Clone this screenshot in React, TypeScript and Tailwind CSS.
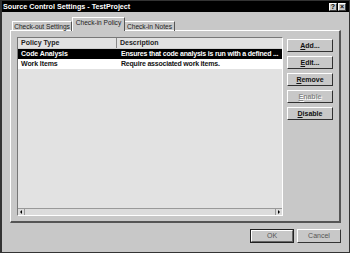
import React from 'react';

const TitleBtn = ({ children }: { children: React.ReactNode }) => (
  <div className="w-[8px] h-[8px] bg-[#c8c8c8] border-t border-l border-white border-r border-b border-r-[#404040] border-b-[#404040] flex items-center justify-center text-[7px] font-bold leading-none text-black">
    {children}
  </div>
);

const SideBtn = ({ u, rest, disabled }: { u: string; rest: string; disabled?: boolean }) => (
  <div
    className={`h-[13px] bg-[#c8c8c8] border-t border-l border-white border-r border-b border-r-[#303030] border-b-[#303030] text-center text-[7px] leading-[11px] font-bold ${
      disabled ? 'text-[#8a8a8a] [text-shadow:1px_1px_0_#ffffff]' : 'text-[#111]'
    }`}
  >
    <span className="underline underline-offset-[1px]">{u}</span>
    {rest}
  </div>
);

const rows = [
  { type: 'Code Analysis', desc: 'Ensures that code analysis is run with a defined ...', selected: true },
  { type: 'Work Items', desc: 'Require associated work items.', selected: false },
];

export default function App() {
  return (
    <div className="w-[350px] h-[253px] bg-[#c8c8c8] font-['Liberation_Sans',Arial,sans-serif] border border-l-2 border-[#333] flex flex-col overflow-hidden select-none">
      {/* Title bar */}
      <div className="h-[11px] bg-black flex items-center justify-between pl-[1px] pr-[3px]">
        <div className="text-white text-[7.2px] font-bold leading-[11px]">Source Control Settings - TestProject</div>
        <div className="flex gap-[1px]">
          <TitleBtn>?</TitleBtn>
          <TitleBtn>×</TitleBtn>
        </div>
      </div>

      <div className="flex flex-col pl-[8px] pr-[8px] pt-[5px]">
        {/* Tabs */}
        <div className="flex items-end h-[14px] relative z-10 -mb-px text-[6.6px] text-[#222] pl-[2px]">
          <div className="w-[60px] h-[10px] border-t border-l border-white border-r border-r-[#555] text-center leading-[9px]">
            Check-out Settings
          </div>
          <div className="w-[53px] h-[14px] bg-[#c8c8c8] border-t border-l border-white border-r border-r-[#555] text-center leading-[10px]">
            Check-in Policy
          </div>
          <div className="w-[50px] h-[10px] border-t border-white border-r border-r-[#555] text-center leading-[9px]">
            Check-in Notes
          </div>
        </div>

        {/* Panel */}
        <div className="h-[193px] border-t border-l border-white border-r-2 border-b-2 border-r-[#555] border-b-[#555] flex gap-[4px] pl-[6px] pt-[6px] pr-[6px]">
          {/* List */}
          <div className="w-[266px] h-[179px] bg-[#e2e2e2] border-t border-l border-[#777] border-r border-b border-r-white border-b-white flex flex-col text-[7px] font-bold">
            <div className="flex h-[11px] border-b border-[#cfcfcf] text-[#222] leading-[10px]">
              <div className="w-[99px] pl-[3px] border-r border-[#888]">Policy Type</div>
              <div className="flex-1 pl-[3px]">Description</div>
            </div>
            {rows.map((r) => (
              <div
                key={r.type}
                className={`flex h-[10px] leading-[10px] ${r.selected ? 'bg-black text-white' : 'bg-white text-[#111]'}`}
              >
                <div className="w-[100px] pl-[3px] tracking-[-0.1px]">{r.type}</div>
                <div className="flex-1 pl-[3px] whitespace-nowrap overflow-hidden tracking-[-0.2px]">{r.desc}</div>
              </div>
            ))}
            {/* Horizontal scrollbar */}
            <div className="mt-auto h-[7px] border-t border-[#999] flex justify-between bg-[#dcdcdc]">
              <div className="w-[7px] h-full border-r border-[#999] flex items-center justify-center">
                <div className="w-0 h-0 border-y-[2px] border-y-transparent border-r-[2px] border-r-black" />
              </div>
              <div className="w-[7px] h-full border-l border-[#999] flex items-center justify-center">
                <div className="w-0 h-0 border-y-[2px] border-y-transparent border-l-[2px] border-l-black" />
              </div>
            </div>
          </div>

          {/* Buttons */}
          <div className="w-[46px] flex flex-col gap-[4px] pt-[2px]">
            <SideBtn u="A" rest="dd..." />
            <SideBtn u="E" rest="dit..." />
            <SideBtn u="R" rest="emove" />
            <SideBtn u="E" rest="nable" disabled />
            <SideBtn u="D" rest="isable" />
          </div>
        </div>

        {/* Bottom buttons */}
        <div className="flex justify-end gap-[3px] mt-[6px] text-[7px] text-[#555]">
          <div className="w-[44px] h-[14px] border border-[#222] flex">
            <div className="flex-1 border-t border-l border-white border-r border-b border-r-[#666] border-b-[#666] text-center leading-[10px]">
              OK
            </div>
          </div>
          <div className="w-[44px] h-[14px] border-t border-l border-white border-r border-b border-r-[#333] border-b-[#333] text-center leading-[12px]">
            Cancel
          </div>
        </div>
      </div>
    </div>
  );
}
